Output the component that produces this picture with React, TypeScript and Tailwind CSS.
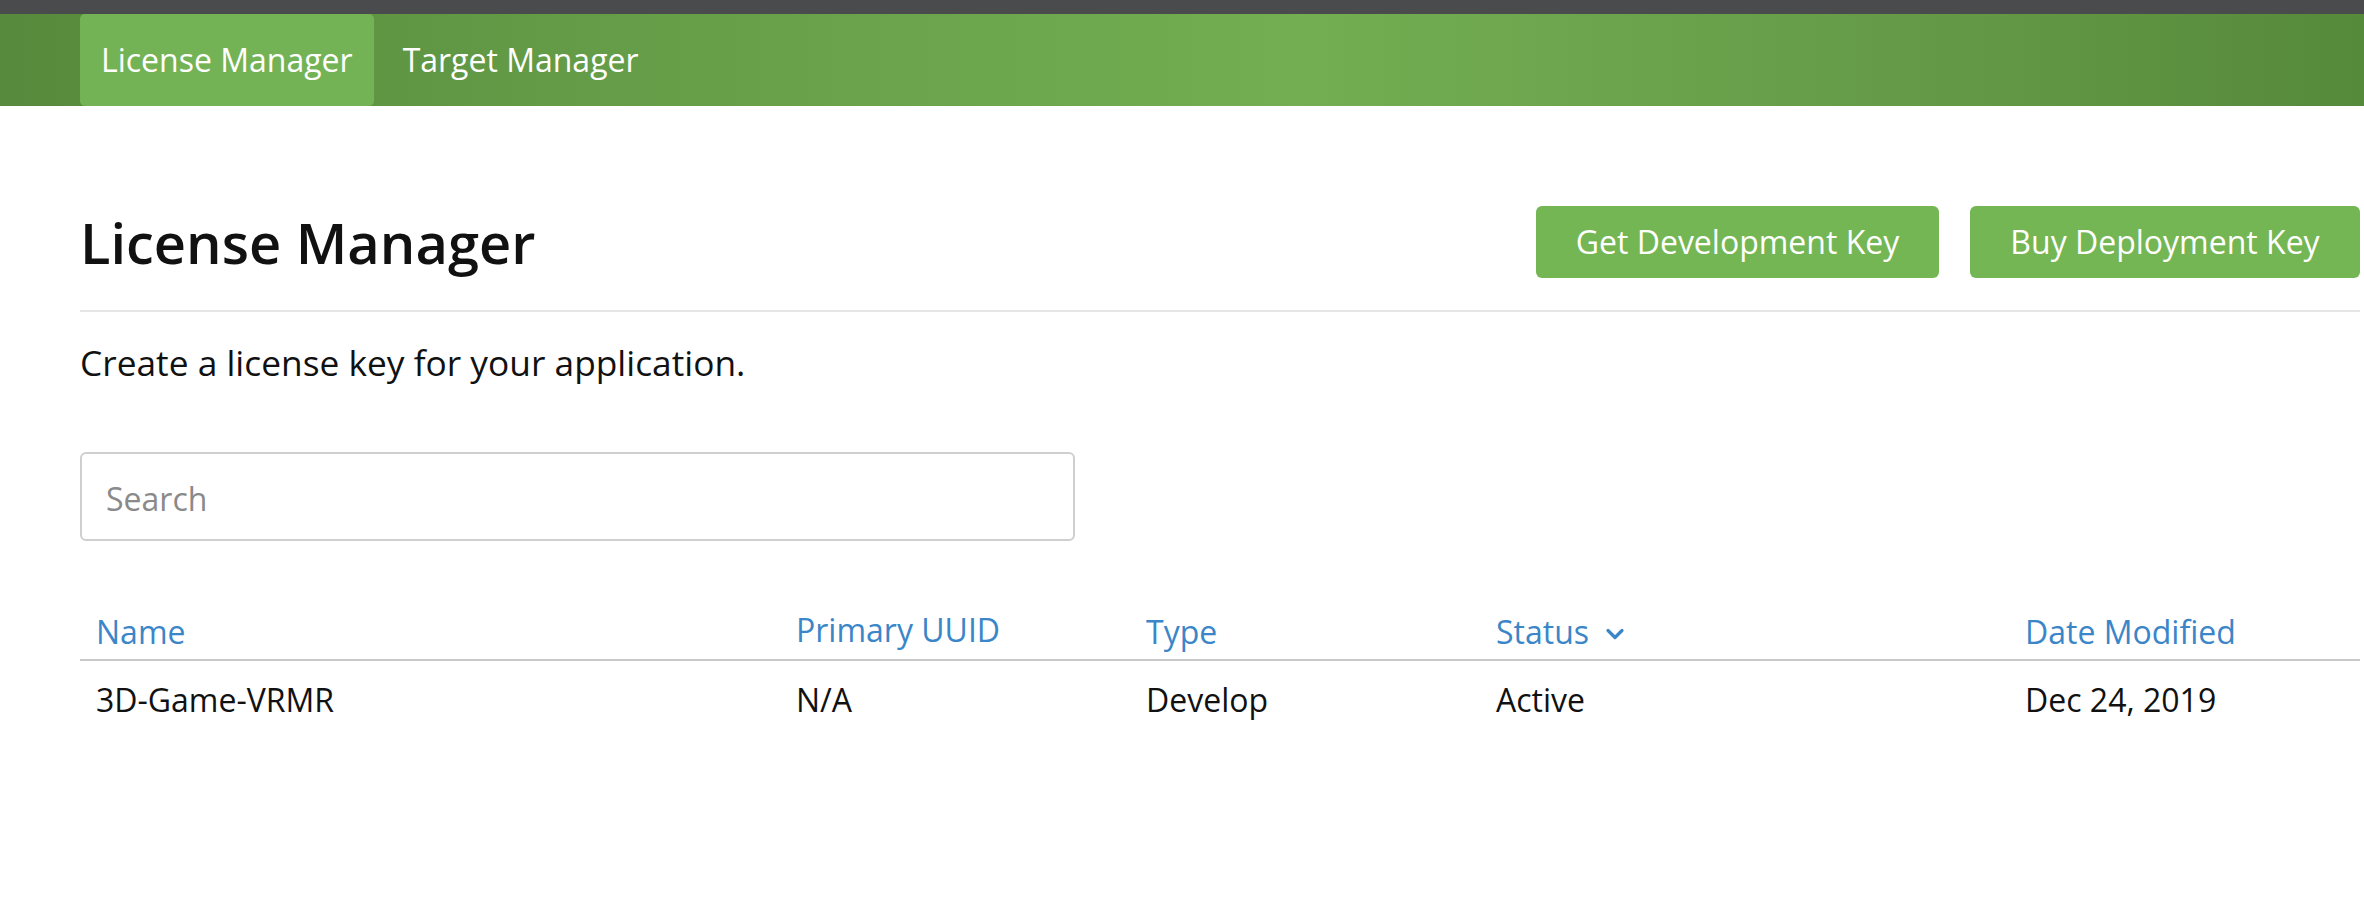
import React from "react";

function Chevron() {
  return (
    <svg width="20" height="14" viewBox="0 0 20 14" className="ml-[16px] mt-[4px]" aria-hidden="true">
      <path d="M3 3.5 L10 10.5 L17 3.5" fill="none" stroke="#3b86c8" strokeWidth="3.2" strokeLinecap="round" strokeLinejoin="round" />
    </svg>
  );
}

export default function App() {
  const font = { fontFamily: '"Open Sans", "Noto Sans", sans-serif' };
  return (
    <div className="w-[2364px] h-[906px] bg-white overflow-hidden" style={font}>
      <div className="h-[14px] bg-[#4a4b4d]" />
      <nav className="h-[92px] bg-[linear-gradient(90deg,#578a3c_0%,#649c47_25%,#73ae52_55%,#659b48_80%,#568a3b_100%)] flex items-stretch pl-[80px] gap-[8px]">
        <div className="bg-[#74b355] rounded-[5px] px-[21px] flex items-center text-white text-[32px] leading-[44px]">
          License Manager
        </div>
        <div className="px-[21px] flex items-center text-white text-[32px] leading-[44px]">
          Target Manager
        </div>
      </nav>

      <main className="ml-[80px] w-[2280px]">
        <div className="mt-[100px] h-[72px] flex items-center justify-between">
          <h1 className="text-[56px] leading-[72px] font-semibold text-[#111]">License Manager</h1>
          <div className="flex gap-[31px]">
            <button className="h-[72px] w-[403px] rounded-[6px] bg-[#74b653] text-white text-[32px] leading-[44px]">
              Get Development Key
            </button>
            <button className="h-[72px] w-[390px] rounded-[6px] bg-[#74b653] text-white text-[32px] leading-[44px]">
              Buy Deployment Key
            </button>
          </div>
        </div>

        <div className="mt-[32px] h-[2px] bg-[#e6e6e6]" />

        <p className="mt-[26px] text-[35.3px] leading-[48px] text-[#111]">Create a license key for your application.</p>

        <div className="mt-[66px] w-[995px] h-[89px] border-2 border-[#cfcfcf] rounded-[6px] flex items-center px-[24px]">
          <span className="mt-[4px] text-[32px] leading-[48px] text-[#8a8a8a]">Search</span>
        </div>

        <div className="mt-[67px] grid grid-cols-[700px_350px_350px_529px_1fr] border-b-2 border-[#c8c8c8] pb-[3px] text-[32px] leading-[48px] text-[#3b86c8]">
          <div className="pl-[16px]">Name</div>
          <div className="pl-[16px] -mt-[2px]">Primary UUID</div>
          <div className="pl-[16px]">Type</div>
          <div className="pl-[16px] flex items-center">
            <span>Status</span>
            <Chevron />
          </div>
          <div className="pl-[16px]">Date Modified</div>
        </div>

        <div className="pt-[15px] grid grid-cols-[700px_350px_350px_529px_1fr] text-[32px] leading-[48px] text-[#111]">
          <div className="pl-[16px]">3D-Game-VRMR</div>
          <div className="pl-[16px]">N/A</div>
          <div className="pl-[16px]">Develop</div>
          <div className="pl-[16px]">Active</div>
          <div className="pl-[16px]">Dec 24, 2019</div>
        </div>
      </main>
    </div>
  );
}
